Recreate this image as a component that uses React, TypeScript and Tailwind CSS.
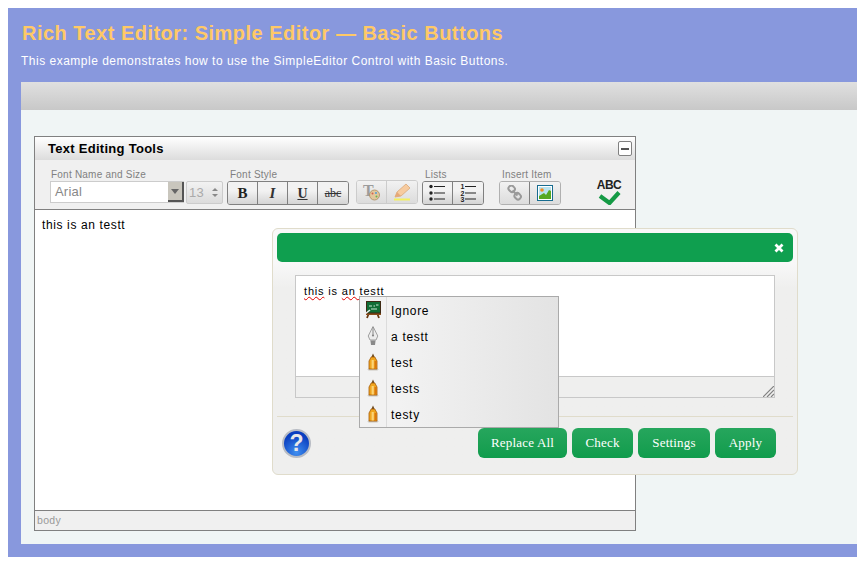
import { useState } from "react";

const sans = "font-['Liberation_Sans',Arial,sans-serif]";
const serif = "font-['Liberation_Serif','Times_New_Roman',serif]";

function PencilIcon() {
  return (
    <svg width="12" height="18" viewBox="0 0 12 18">
      <ellipse cx="6" cy="16.4" rx="5.5" ry="1.2" fill="#c9c5bd" />
      <path d="M6 0.5 L7.6 4 L4.4 4 Z" fill="#6b4a20" />
      <path d="M4.2 4 L7.8 4 L10 8 L10 16 L2 16 L2 8 Z" fill="#f0a51e" stroke="#a55a08" strokeWidth="0.8" />
      <path d="M4.6 7 L6.8 7 L6.8 15.5 L4.6 15.5 Z" fill="#fbd377" />
      <path d="M7.6 8 L9.6 8 L9.6 15.6 L7.6 15.6 Z" fill="#d9770f" />
    </svg>
  );
}

function NibIcon() {
  return (
    <svg width="12" height="20" viewBox="0 0 12 20">
      <path d="M6 0.5 L10.8 10 L9 14 L3 14 L1.2 10 Z" fill="#ececec" stroke="#a0a0a0" strokeWidth="1" />
      <path d="M6 1 L6 9" stroke="#888" strokeWidth="1" />
      <circle cx="6" cy="9.5" r="1.1" fill="#888" />
      <path d="M3.4 14.5 L8.6 14.5 L8 19 L4 19 Z" fill="#8a8a8a" />
    </svg>
  );
}

function BoardIcon() {
  return (
    <svg width="16" height="18" viewBox="0 0 16 18">
      <path d="M2 17 L4 12 M14 17 L12 12" stroke="#6b3a12" strokeWidth="1.8" />
      <rect x="1" y="12" width="15" height="2" fill="#8a4d1b" />
      <rect x="1.5" y="0.5" width="14" height="11.5" fill="#0f6d35" stroke="#3d2a14" />
      <path d="M4 5 H7 M8.5 5 H10 M11 4 H13.5 M6 8 H12" stroke="#c9e8d3" strokeWidth="1.2" />
      <path d="M0 13 L5 9" stroke="#eeeeee" strokeWidth="1.6" />
    </svg>
  );
}

function ListIcon({ numbered }: { numbered?: boolean }) {
  return (
    <svg width="17" height="18" viewBox="0 0 17 18">
      {[2.5, 9, 15].map((y, i) => (
        <g key={y}>
          {numbered ? (
            <text x="0.5" y={y + 2.5} fontSize="7" fontWeight="700" fill="#222" fontFamily="Liberation Sans">
              {i + 1}
            </text>
          ) : (
            <circle cx="2" cy={y} r="1.7" fill="#222" />
          )}
          <rect x="5" y={y - 0.5} width="11" height="1" fill="#222" />
        </g>
      ))}
    </svg>
  );
}

function ToolButton({ children, last }: { children: React.ReactNode; last?: boolean }) {
  return (
    <div
      className={`flex h-full w-[30px] items-center justify-center bg-gradient-to-b from-[#f2f2f2] from-40% to-[#d4d4d4] ${
        last ? "" : "border-r border-[#808080]"
      }`}
    >
      {children}
    </div>
  );
}

function Group({ label, children, className, labelClass = "ml-[3px]" }: { label: string; children: React.ReactNode; className: string; labelClass?: string }) {
  return (
    <div className={`flex flex-col ${className}`}>
      <div className={`h-[10px] text-[10px] leading-[10px] tracking-[0.22px] text-[#808080] ${labelClass}`}>{label}</div>
      {children}
    </div>
  );
}

function GreenButton({ label, width }: { label: string; width: string }) {
  return (
    <button
      className={`flex h-[30px] items-center justify-center rounded-[6px] bg-gradient-to-b from-[#26a65d] to-[#0f9c4c] text-[13px] tracking-[0.2px] text-white ${serif} ${width}`}
    >
      {label}
    </button>
  );
}

const suggestions = ["Ignore", "a testt", "test", "tests", "testy"];

export default function App() {
  const [text] = useState("this is an testt");

  return (
    <div className={`relative h-[567px] w-[857px] overflow-hidden bg-white pl-2 pt-2 ${sans}`}>
      <div className="h-[549px] bg-[#8898dd] pl-[13px] pt-[11px]">
        <h1 className="ml-px text-[20px] font-bold leading-[28px] tracking-[0.48px] text-[#ffc966]">
          Rich Text Editor: Simple Editor — Basic Buttons
        </h1>
        <p className="mt-[6px] text-[12px] leading-[16px] tracking-[0.5px] text-white">
          This example demonstrates how to use the SimpleEditor Control with Basic Buttons.
        </p>

        <div className="mt-[13px] h-[462px] bg-[#f0f5f5]">
          <div className="h-[28px] bg-gradient-to-b from-[#e0e0e0] to-[#c8c8c8]" />

          <div className="ml-[13px] mt-[26px] flex h-[395px] w-[602px] flex-col border border-[#808080] bg-white">
            <div className="flex h-[23px] items-center justify-between bg-gradient-to-b from-white to-[#dcdcdc] pl-[13px] pr-[3px]">
              <span className="text-[13px] font-bold tracking-[0.28px] text-black">Text Editing Tools</span>
              <div className="flex h-[15px] w-[14px] items-center justify-center rounded-[2px] border border-[#808080] bg-white">
                <div className="h-[2px] w-[8px] bg-[#555]" />
              </div>
            </div>

            <div className="flex h-[50px] border-b border-[#808080] bg-[#f0f0f0] pl-[15px] pt-[10px]">
              <Group label="Font Name and Size" labelClass="ml-[1px]" className="w-[175px]">
                <div className="mt-[1px] flex">
                  <div className="flex h-[22px] w-[134px] border border-[#cccccc] bg-white">
                    <span className="flex-1 pl-[4px] text-[13px] leading-[20px] tracking-[0.2px] text-[#888]">Arial</span>
                    <div className="-mr-px flex w-[16px] items-center justify-center border-b-2 border-r-2 border-[#555] bg-[#c9c6bd]">
                      <div className="h-0 w-0 border-x-[4px] border-t-[5px] border-x-transparent border-t-[#666]" />
                    </div>
                  </div>
                  <div className="ml-[2px] flex h-[23px] w-[37px] items-center justify-between rounded-[2px] border border-[#cccccc] bg-gradient-to-b from-[#f2f2f2] to-[#dcdcdc] pl-[2px] pr-[4px]">
                    <span className="text-[13px] tracking-[0.3px] text-[#aaa]">13</span>
                    <div className="flex flex-col gap-[3px]">
                      <div className="h-0 w-0 border-x-[3px] border-b-[3px] border-x-transparent border-b-[#888]" />
                      <div className="h-0 w-0 border-x-[3px] border-t-[3px] border-x-transparent border-t-[#888]" />
                    </div>
                  </div>
                </div>
              </Group>

              <Group label="Font Style" className="ml-[2px] w-[129px]">
                <div className="mt-[1px] flex h-[24px] w-[122px] overflow-hidden rounded-[3px] border border-[#808080]">
                  <ToolButton><span className={`${serif} text-[15px] font-bold text-[#222]`}>B</span></ToolButton>
                  <ToolButton><span className={`${serif} text-[15px] font-bold italic text-[#333]`}>I</span></ToolButton>
                  <ToolButton><span className={`${serif} text-[14px] font-bold text-[#333] underline`}>U</span></ToolButton>
                  <ToolButton last><span className={`${serif} text-[12px] text-[#333] line-through`}>abc</span></ToolButton>
                </div>
              </Group>

              <div className="mt-[10px] flex h-[24px] w-[62px] overflow-hidden rounded-[3px] border border-[#cccccc]">
                <div className="flex h-full w-[30px] items-center justify-center border-r border-[#cccccc] bg-gradient-to-b from-[#f2f2f2] to-[#dcdcdc]">
                  <svg width="20" height="20" viewBox="0 0 20 20">
                    <text x="1" y="14" fontSize="16" fontWeight="700" fill="#9c9c9c" fontFamily="Liberation Serif">T</text>
                    <circle cx="12.5" cy="13" r="5" fill="#e2c79c" stroke="#a98a5d" strokeWidth="0.8" />
                    <circle cx="10.5" cy="11.5" r="1" fill="#d6604d" />
                    <circle cx="14" cy="11" r="1" fill="#4f9bd9" />
                    <circle cx="14.5" cy="14.5" r="1" fill="#69b34c" />
                  </svg>
                </div>
                <div className="flex h-full w-[30px] items-center justify-center bg-gradient-to-b from-[#f2f2f2] to-[#dcdcdc]">
                  <svg width="20" height="20" viewBox="0 0 20 20">
                    <path d="M3 15 L5 10 L14 2 L18 6 L9 14 Z" fill="#f7cb9f" stroke="#d9a878" strokeWidth="0.8" />
                    <path d="M3 15 L5 10 L9 14 Z" fill="#e5a878" />
                    <rect x="2" y="16.5" width="16" height="2" fill="#f4f060" />
                  </svg>
                </div>
              </div>

              <Group label="Lists" className="ml-[4px] w-[77px]">
                <div className="mt-[1px] flex h-[24px] w-[62px] overflow-hidden rounded-[3px] border border-[#808080]">
                  <ToolButton><ListIcon /></ToolButton>
                  <ToolButton last><ListIcon numbered /></ToolButton>
                </div>
              </Group>

              <Group label="Insert Item" className="w-[62px]">
                <div className="mt-[1px] flex h-[24px] w-[62px] overflow-hidden rounded-[3px] border border-[#b0b0b0]">
                  <div className="flex h-full w-[30px] items-center justify-center border-r border-[#808080] bg-gradient-to-b from-[#f2f2f2] to-[#dcdcdc]">
                    <svg width="16" height="16" viewBox="0 0 16 16" fill="none" stroke="#9a9a9a" strokeWidth="2">
                      <rect x="1.5" y="1" width="6.5" height="5.5" rx="2.5" transform="rotate(45 4.7 3.7)" />
                      <rect x="7.5" y="8.5" width="6.5" height="5.5" rx="2.5" transform="rotate(45 10.7 11.2)" />
                      <path d="M5.5 5.5 L10.5 10.5" />
                    </svg>
                  </div>
                  <div className="flex h-full w-[30px] items-center justify-center bg-gradient-to-b from-[#f2f2f2] to-[#dcdcdc]">
                    <svg width="16" height="16" viewBox="0 0 16 16">
                      <rect x="0.5" y="0.5" width="15" height="15" fill="#fff" stroke="#176b8f" />
                      <rect x="2" y="2" width="12" height="12" fill="#b9e3ee" />
                      <circle cx="5" cy="5" r="1.8" fill="#f08c28" />
                      <path d="M2 14 L2 11 L7 8 L9 10 L12 5 L14 6 L14 14 Z" fill="#55a821" />
                    </svg>
                  </div>
                </div>
              </Group>

              <div className="ml-[36px] mt-[10px] flex w-[24px] flex-col items-center">
                <span className="h-[11px] text-[12px] font-bold leading-[11px] tracking-[-0.5px] text-[#222]">ABC</span>
                <svg width="23" height="14" viewBox="0 0 23 14">
                  <path d="M2 5 L11.5 12 L21 1.5" fill="none" stroke="#159a45" strokeWidth="4.2" />
                </svg>
              </div>
            </div>

            <div className="flex-1 px-[7px] pt-[7px] text-[12px] leading-[16px] tracking-[0.62px] text-black">{text}</div>

            <div className="h-[20px] border-t border-[#808080] bg-[#f0f0f0] pl-[2px] text-[10.5px] leading-[18px] tracking-[0.3px] text-[#999]">
              body
            </div>
          </div>
        </div>
      </div>

      {/* Spell check dialog */}
      <div className="absolute left-[272px] top-[228px] flex h-[247px] w-[526px] flex-col rounded-[6px] border border-[#e0dccb] bg-[#efefee] bg-gradient-to-b from-[#f8f8f8] from-[14%] to-[#efefee] to-[24%] px-[4px] pt-[4px]">
        <div className="flex h-[29px] items-center justify-end rounded-[5px] bg-[#0f9f4f] pr-[9px]">
          <svg width="10" height="10" viewBox="0 0 10 10">
            <path d="M1.5 1.5 L8.5 8.5 M8.5 1.5 L1.5 8.5" stroke="#fff" strokeWidth="2.8" />
          </svg>
        </div>
        <div className="ml-[18px] mt-[13px] flex h-[123px] w-[480px] flex-col border border-[#c8c8c8]">
          <div className={`h-[100px] bg-white pl-[8px] pt-[8px] text-[11px] leading-[14px] tracking-[0.82px] text-black ${sans}`}>
            <span className="underline decoration-[#e00000] decoration-wavy decoration-1">this</span>{" "}
            is{" "}
            <span className="underline decoration-[#e00000] decoration-wavy decoration-1">an testt</span>
          </div>
          <div className="flex flex-1 items-end justify-end border-t border-[#c8c8c8] bg-[#efefee]">
            <svg width="11" height="11" viewBox="0 0 11 11" stroke="#808080" strokeWidth="1.2">
              <path d="M0 11 L11 0 M4 11 L11 4 M8 11 L11 8" />
            </svg>
          </div>
        </div>
        <div className="mt-[18px] h-px bg-[#e0dccb]" />
        <div className="mt-[11px] flex items-center pl-[5px]">
          <div className="flex h-[29px] w-[29px] items-center justify-center rounded-full border-2 border-[#b8bcc4] bg-[radial-gradient(circle_at_50%_85%,#3f8ff0,#0a3fc0_70%)] text-[23px] font-bold leading-none text-[#e8e8e8]">
            ?
          </div>
          <div className="ml-[167px] flex gap-[5px]">
            <GreenButton label="Replace All" width="w-[89px]" />
            <GreenButton label="Check" width="w-[61px]" />
            <GreenButton label="Settings" width="w-[72px]" />
            <GreenButton label="Apply" width="w-[61px]" />
          </div>
        </div>
      </div>

      {/* Suggestions menu */}
      <div className="absolute left-[359px] top-[296px] h-[132px] w-[200px] border border-[#aaaaaa] bg-gradient-to-r from-[#f2f2f2] from-20% to-[#e3e3e3]">
        {suggestions.map((word, i) => (
          <div key={word} className="flex h-[26px] items-center">
            <div className="flex h-full w-[27px] items-center justify-center border-r border-[#dcdcdc]">
              {i === 0 ? <BoardIcon /> : i === 1 ? <NibIcon /> : <PencilIcon />}
            </div>
            <span className="ml-[4px] pt-[1px] text-[12px] tracking-[0.7px] text-black">{word}</span>
          </div>
        ))}
      </div>
    </div>
  );
}
